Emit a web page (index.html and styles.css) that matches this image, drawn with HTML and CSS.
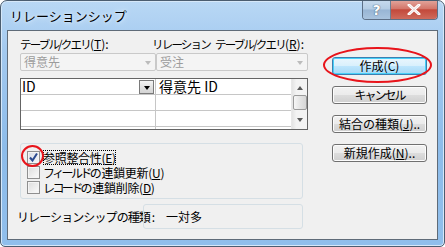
FILE: index.html
```html
<!DOCTYPE html>
<html lang="ja">
<head>
<meta charset="utf-8">
<title>リレーションシップ</title>
<link rel="stylesheet" href="styles.css">
</head>
<body>
<div class="window">
  <div class="titlebar">
    <span class="title">リレーションシップ</span>
    <div class="caption-btns">
      <div class="cbtn help">?</div>
      <div class="cbtn close">
        <svg width="14" height="11" viewBox="0 0 14 11"><path d="M2 1 L12 10 M12 1 L2 10" stroke="#ffffff" stroke-width="3" stroke-linecap="round"/><path d="M2 1 L12 10 M12 1 L2 10" stroke="#8a3a33" stroke-width="0.6" fill="none" opacity="0.3"/></svg>
      </div>
    </div>
  </div>
  <div class="client">
    <div class="left">
      <div class="labels">
        <span class="lbl lbl1"><span class="kana">テーブル/クエリ</span>(<u>T</u>):</span>
        <span class="lbl lbl2"><span class="kana">リレーション</span><span class="gap"></span><span class="kana">テーブル/クエリ</span>(<u>R</u>):</span>
      </div>
      <div class="combos">
        <div class="combo combo1"><span>得意先</span><span class="carrow"></span></div>
        <div class="combo combo2"><span>受注</span><span class="carrow"></span></div>
      </div>
      <div class="grid">
        <div class="gcol gcol1">
          <div class="grow"><span>ID</span><span class="dropbtn"><span class="dtri"></span></span></div>
          <div class="grow"></div>
          <div class="grow"></div>
          <div class="grow last"></div>
        </div>
        <div class="gcol gcol2">
          <div class="grow"><span>得意先 ID</span></div>
          <div class="grow"></div>
          <div class="grow"></div>
          <div class="grow last"></div>
        </div>
        <div class="scrollbar">
          <span class="sarrow up"></span>
          <span class="thumb"></span>
          <span class="sarrow down"></span>
        </div>
      </div>
      <div class="group">
        <div class="chkrow"><span class="chk checked"><svg width="11" height="11" viewBox="0 0 11 11"><path d="M2 5.5 L4.5 8.5 L9 1.5" stroke="#2b4a8f" stroke-width="2" fill="none"/></svg></span><span class="chktext focus">参照整合性(<u>E</u>)</span></div>
        <div class="chkrow"><span class="chk"></span><span class="chktext"><span class="kana">フィールド</span>の連鎖更新(<u>U</u>)</span></div>
        <div class="chkrow"><span class="chk"></span><span class="chktext"><span class="kana">レコード</span>の連鎖削除(<u>D</u>)</span></div>
        <span class="redcircle"></span>
      </div>
      <div class="typerow">
        <span class="typelabel">リレーションシップの種類 :</span>
        <div class="typebox">一対多</div>
      </div>
    </div>
    <div class="right">
      <div class="btn default">作成(C)</div>
      <div class="btn"><span class="narrow">キャンセル</span></div>
      <div class="btn">結合の種類(<u>J</u>)..</div>
      <div class="btn">新規作成(<u>N</u>)..</div>
      <span class="redellipse"></span>
    </div>
  </div>
</div>
</body>
</html>
```

FILE: styles.css
```css
html, body {
  margin: 0;
  padding: 0;
  background: #ffffff;
}
body {
  font-family: "Noto Sans CJK JP", "Noto Sans", sans-serif;
  font-size: 12px;
  color: #000000;
}
.window {
  width: 445px;
  height: 247px;
  box-sizing: border-box;
  border: 1px solid #4b5d70;
  border-radius: 7px 7px 5px 5px;
  padding: 0 6px 6px 6px;
  background: linear-gradient(180deg, #b9d8f5 0%, #a3c9ef 20%, #8dbcea 60%, #90beeb 100%);
  box-shadow: inset 0 0 0 1px #d6e8f9;
  display: flex;
  flex-direction: column;
  overflow: hidden;
}
.titlebar {
  height: 29px;
  display: flex;
  align-items: flex-start;
  justify-content: space-between;
}
.title {
  margin-top: 6px;
  margin-left: 3px;
  font-size: 13px;
  line-height: 17px;
  letter-spacing: 0px;
  color: #000000;
  text-shadow: 0 0 6px #e6f2fc, 0 0 3px #e6f2fc;
}
.caption-btns {
  display: flex;
  margin-top: -1px;
  border: 1px solid #5d6f86;
  border-top: none;
  border-radius: 0 0 4px 4px;
  overflow: hidden;
  height: 19px;
}
.cbtn {
  height: 19px;
  display: flex;
  align-items: center;
  justify-content: center;
}
.help {
  width: 27px;
  border-right: 1px solid #6d7f94;
  background: linear-gradient(180deg, #c8dbee 0%, #b4cce4 48%, #98b5d4 52%, #a9c3de 100%);
  color: #ffffff;
  font-family: "DejaVu Sans", sans-serif;
  font-weight: bold;
  font-size: 14px;
  text-shadow: 0 0 1px #3d5670, 0 0 1px #3d5670;
}
.close {
  width: 46px;
  background: linear-gradient(180deg, #e3a89f 0%, #d4776b 45%, #c3493b 52%, #cf6b5c 100%);
}
.client {
  flex: 1;
  border: 1px solid #5f6b78;
  background: #f0f0f0;
  display: flex;
  position: relative;
}
.left {
  width: 288px;
  margin-left: 12px;
  display: flex;
  flex-direction: column;
}
.labels {
  margin-top: 6px;
  display: flex;
  line-height: 13px;
  height: 13px;
}
.lbl {
  white-space: nowrap;
}
.lbl .kana {
  font-size: 11.5px;
  letter-spacing: -1.8px;
}
.lbl1 {
  width: 132px;
}
.gap {
  display: inline-block;
  width: 5px;
}
.combos {
  margin-top: 3px;
  display: flex;
  height: 18px;
}
.combo {
  box-sizing: border-box;
  height: 18px;
  border: 1px solid #c9c9c9;
  border-radius: 2px;
  background: #f4f4f4;
  color: #9c9c9c;
  display: flex;
  align-items: center;
  justify-content: space-between;
  padding: 0 4px 0 3px;
  line-height: 14px;
}
.combo1 {
  width: 136px;
}
.combo2 {
  width: 152px;
}
.carrow {
  width: 0;
  height: 0;
  border-left: 3.5px solid transparent;
  border-right: 3.5px solid transparent;
  border-top: 4px solid #bcbcbc;
  margin-top: 1px;
}
.grid {
  margin-top: 7px;
  box-sizing: border-box;
  height: 52px;
  border: 1px solid #646464;
  background: #ffffff;
  display: flex;
}
.gcol {
  display: flex;
  flex-direction: column;
  box-sizing: border-box;
}
.gcol1 {
  width: 135px;
  border-right: 1px solid #c6c6c6;
}
.gcol2 {
  width: 135px;
}
.grow {
  box-sizing: border-box;
  height: 16px;
  flex: none;
  border-bottom: 1px solid #c6c6c6;
  display: flex;
  align-items: center;
  justify-content: space-between;
  font-size: 14px;
  line-height: 15px;
  padding-left: 1px;
  padding-right: 1px;
}
.grow.last {
  height: 2px;
  border-bottom: none;
}
.gcol2 .grow {
  padding-left: 3px;
}
.dropbtn {
  box-sizing: border-box;
  width: 15px;
  height: 14px;
  border: 1px solid #7a7a7a;
  background: linear-gradient(180deg, #f4f4f4 0%, #e2e2e2 50%, #d4d4d4 100%);
  display: flex;
  align-items: center;
  justify-content: center;
}
.dtri {
  width: 0;
  height: 0;
  border-left: 3.5px solid transparent;
  border-right: 3.5px solid transparent;
  border-top: 4px solid #000000;
  margin-top: 2px;
}
.scrollbar {
  flex: 1;
  border-left: 1px solid #e8e8e8;
  background: linear-gradient(90deg, #e4e4e4 0%, #f3f3f3 30%, #f3f3f3 100%);
  display: flex;
  flex-direction: column;
  align-items: center;
}
.sarrow {
  width: 0;
  height: 0;
  border-left: 3.5px solid transparent;
  border-right: 3.5px solid transparent;
}
.sarrow.up {
  border-bottom: 4px solid #5a5a5a;
  margin-top: 7px;
}
.sarrow.down {
  border-top: 4px solid #5a5a5a;
  margin-top: 8px;
}
.thumb {
  box-sizing: border-box;
  width: 14px;
  height: 15px;
  margin-top: 5px;
  border: 1px solid #9a9a9a;
  border-radius: 2px;
  background: linear-gradient(90deg, #f6f6f6 0%, #e4e4e4 50%, #d6d6d6 100%);
}
.group {
  position: relative;
  margin-top: 13px;
  box-sizing: border-box;
  width: 283px;
  height: 56px;
  border: 1px solid #d5dfe5;
  border-radius: 3px;
  padding: 6px 0 0 6px;
  display: flex;
  flex-direction: column;
}
.chkrow {
  height: 15px;
  display: flex;
  align-items: center;
}
.chk {
  box-sizing: border-box;
  width: 13px;
  height: 13px;
  border: 1px solid #8f8f8f;
  background: linear-gradient(135deg, #dcdcdc 0%, #f2f2f2 70%, #fafafa 100%);
  box-shadow: inset 0 0 0 1px #f4f4f4;
  display: flex;
  align-items: center;
  justify-content: center;
}
.chk.checked {
  background: linear-gradient(135deg, #d8dde6 0%, #eef0f4 70%);
}
.chktext {
  margin-left: 3px;
  line-height: 15px;
  height: 15px;
  letter-spacing: -0.3px;
  white-space: nowrap;
}
.chktext .kana {
  letter-spacing: -2.6px;
}
.chktext.focus {
  outline: 1px dotted #000000;
  outline-offset: -1px;
}
.redcircle {
  position: absolute;
  left: 0px;
  top: 1px;
  width: 19px;
  height: 18px;
  border: 2px solid #e8141b;
  border-radius: 50%;
}
.typerow {
  margin-top: 5px;
  display: flex;
  align-items: center;
  height: 25px;
}
.typelabel {
  width: 126px;
  margin-left: -3px;
  letter-spacing: -0.9px;
  white-space: nowrap;
}
.typebox {
  box-sizing: border-box;
  width: 160px;
  height: 25px;
  border: 1px solid #d5dfe5;
  border-radius: 3px;
  padding-left: 22px;
  display: flex;
  align-items: center;
  line-height: 14px;
}
.right {
  position: relative;
  margin-left: 24px;
  margin-top: 26px;
  display: flex;
  flex-direction: column;
  gap: 11px;
}
.btn {
  box-sizing: border-box;
  width: 95px;
  height: 18px;
  border: 1px solid #707070;
  border-radius: 3px;
  background: linear-gradient(180deg, #f2f2f2 0%, #ebebeb 49%, #dddddd 50%, #cfcfcf 100%);
  box-shadow: inset 0 0 0 1px #fcfcfc;
  display: flex;
  align-items: center;
  justify-content: center;
  line-height: 14px;
  white-space: nowrap;
}
.btn .narrow {
  letter-spacing: -2px;
}
.btn.default {
  border-color: #3c7fb1;
  background: linear-gradient(180deg, #eaf6fd 0%, #d9f0fc 49%, #bee6fd 50%, #a7d9f5 100%);
  box-shadow: inset 0 0 0 1px #48d0f8;
}
.redellipse {
  position: absolute;
  left: -9px;
  top: -10px;
  width: 105px;
  height: 32px;
  border: 2px solid #e8141b;
  border-radius: 50%;
}
```
